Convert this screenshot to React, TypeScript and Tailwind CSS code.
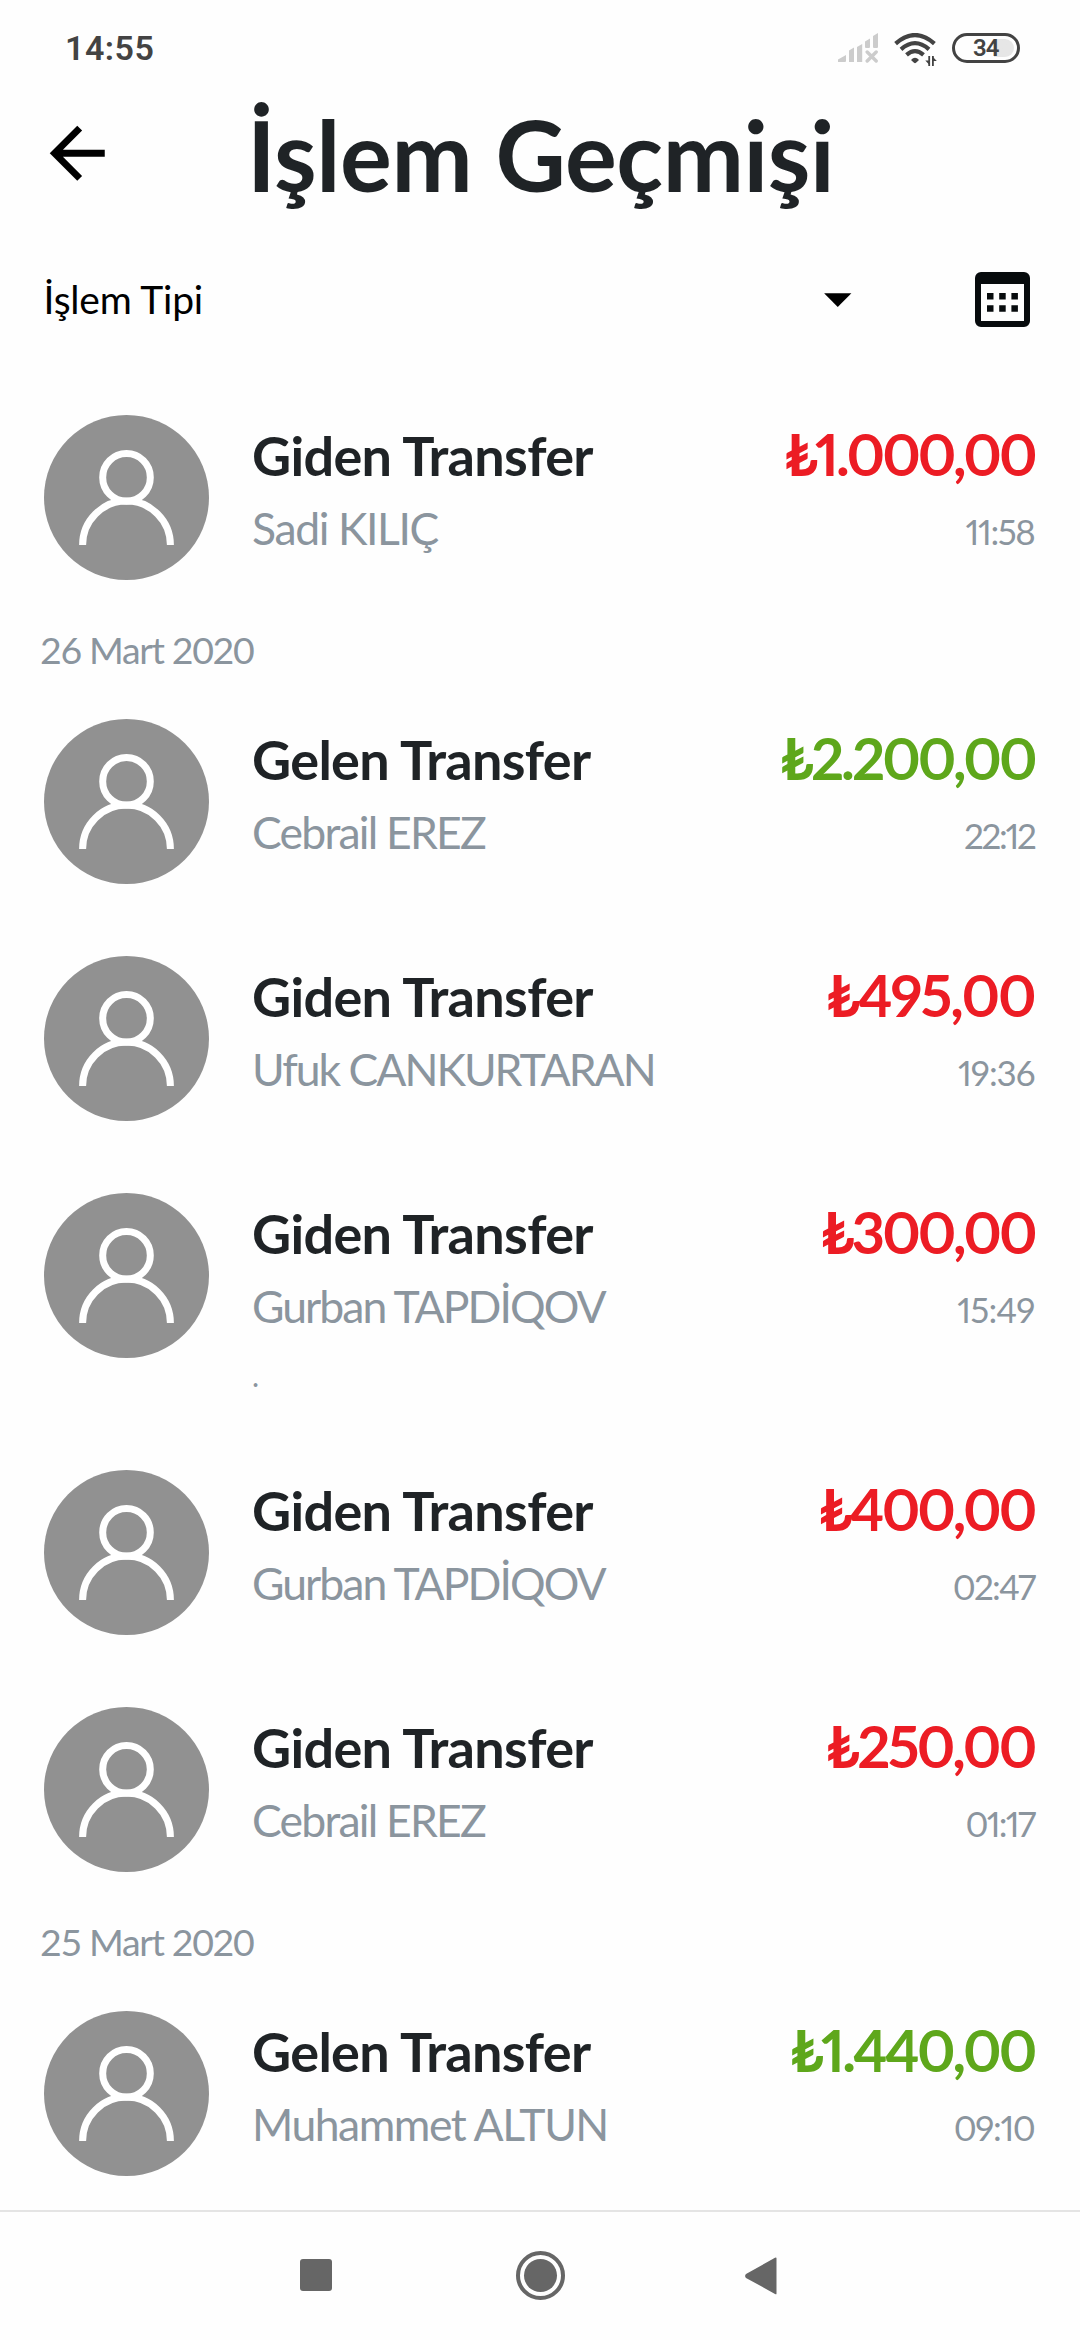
type Transfer = {
  title: string;
  name: string;
  nameClass: string;
  amount: string;
  amountClass: string;
  time: string;
  timeClass: string;
  incoming?: boolean;
  note?: string;
};

const groups: { date?: string; items: Transfer[] }[] = [
  {
    items: [
      { title: 'Giden Transfer', name: 'Sadi KILIÇ', nameClass: 'tracking-[-1.4px]', amount: '₺1.000,00', amountClass: 'tracking-[-3px]', time: '11:58', timeClass: 'tracking-[-1.4px]' },
    ],
  },
  {
    date: '26 Mart 2020',
    items: [
      { title: 'Gelen Transfer', name: 'Cebrail EREZ', nameClass: 'tracking-[-1.77px]', amount: '₺2.200,00', amountClass: 'tracking-[-3px]', time: '22:12', timeClass: 'tracking-[-2.3px]', incoming: true },
      { title: 'Giden Transfer', name: 'Ufuk CANKURTARAN', nameClass: 'tracking-[-2px]', amount: '₺495,00', amountClass: 'tracking-[-2.1px]', time: '19:36', timeClass: 'tracking-[-1.05px]' },
      { title: 'Giden Transfer', name: 'Gurban TAPDİQOV', nameClass: 'tracking-[-1.95px]', amount: '₺300,00', amountClass: 'tracking-[-3px]', time: '15:49', timeClass: 'tracking-[-0.8px]', note: '.' },
      { title: 'Giden Transfer', name: 'Gurban TAPDİQOV', nameClass: 'tracking-[-1.95px]', amount: '₺400,00', amountClass: 'tracking-[-2.9px]', time: '02:47', timeClass: 'tracking-[-1.8px]' },
      { title: 'Giden Transfer', name: 'Cebrail EREZ', nameClass: 'tracking-[-1.77px]', amount: '₺250,00', amountClass: 'tracking-[-2.75px]', time: '01:17', timeClass: 'tracking-[-1.8px]' },
    ],
  },
  {
    date: '25 Mart 2020',
    items: [
      { title: 'Gelen Transfer', name: 'Muhammet ALTUN', nameClass: 'tracking-[-1.5px]', amount: '₺1.440,00', amountClass: 'tracking-[-2.8px]', time: '09:10', timeClass: 'tracking-[-1.4px]', incoming: true },
    ],
  },
];

function StatusBar() {
  return (
    <header className="flex h-[68px] shrink-0 items-start justify-between pl-[65px] pr-[60px] font-['Roboto',sans-serif] text-[#434343]">
      <span className="mt-7 text-[34px] leading-10 font-semibold tracking-[0.5px]">14:55</span>
      <div className="mt-[33px] flex items-start">
        <svg className="mr-4 h-[30px] w-10" viewBox="0 0 40 30" fill="#cccccc">
          <path d="M0 29V26.5L8 22V28Q8 29 7 29ZM11 29V17.5L16 14.5V29ZM19 29V14L24.2 11V29ZM27 14V8.5L32 5.5V14Q32 15 31 15H28Q27 15 27 14ZM35 14V3L40 0V14Q40 15 39 15H36Q35 15 35 14Z" />
          <path d="M29.2 19l9 9M38.200 19l-9 9" stroke="#cccccc" strokeWidth="3.4" strokeLinecap="round" />
        </svg>
        <svg className="mr-[15px] h-[34px] w-[43px]" viewBox="0 0 43 34" fill="none" stroke="#434343">
          <path d="M1.6 10.6Q21 -6.5 40.4 10.6" strokeWidth="4.2" />
          <path d="M7 16.3Q21 4 35 16.3" strokeWidth="4.2" />
          <path d="M12.5 21.8Q21 14.500 29.5 21.8" strokeWidth="4.2" />
          <path d="M17 27Q21 22.5 25 27L22 29.800Q21 30.5 20 29.800Z" fill="#434343" stroke="none" />
          <path d="M35.2 23V33M38.9 23V33" strokeWidth="1.8" />
          <path d="M36 32.500L31.3 27.500H36ZM38.500 23.500L42.800 28H38.500Z" fill="#434343" stroke="none" />
        </svg>
        <div className="flex h-[30px] w-[68px] items-center justify-center rounded-full border-[3.5px] border-[#434343] p-[3px]">
          <div className="flex h-[18px] w-full items-center rounded-full bg-linear-to-r from-transparent from-65% to-[#e6e6e6] to-65% pl-[15px]">
            <span className="text-[24px] leading-none font-semibold tracking-[-1px]">34</span>
          </div>
        </div>
      </div>
    </header>
  );
}

function Avatar() {
  return (
    <svg className="size-[165px] shrink-0" viewBox="0 0 165 165" fill="none">
      <circle cx="82.5" cy="82.5" r="82.5" fill="#919191" />
      <circle cx="82.5" cy="62.4" r="23.8" stroke="#fff" strokeWidth="7" />
      <path d="M38.6 130a43.9 43.9 0 0 1 87.800 0" stroke="#fff" strokeWidth="7" />
    </svg>
  );
}

function Row({ item }: { item: Transfer }) {
  return (
    <li className={item.note ? 'flex h-[205px] items-start' : 'flex h-[165px] items-start'}>
      <Avatar />
      <div className="ml-[43px] flex flex-1 flex-col pt-[9px]">
        <span className="text-[54px] leading-[64px] font-bold tracking-[-0.67px] text-[#1f2326]">{item.title}</span>
        <span className={`mt-[13px] text-[44.5px] leading-[54px] ${item.nameClass}`}>{item.name}</span>
        {item.note && <span className="mt-[21px] text-[30px] leading-[42px]">{item.note}</span>}
      </div>
      <div className="flex flex-col items-end pt-[7px] proportional-nums">
        <span className={`text-[58px] leading-[64px] font-bold ${item.incoming ? 'text-[#5ea71b]' : 'text-[#ec1c24]'} ${item.amountClass}`}>{item.amount}</span>
        <span className={`mt-[23px] text-[35px] leading-[44px] ${item.timeClass}`}>{item.time}</span>
      </div>
    </li>
  );
}

export default function App() {
  return (
    <main className="flex h-[2340px] w-[1080px] flex-col overflow-hidden bg-[#fefefe] font-['Lato',sans-serif] text-[#8b959e]">
      <StatusBar />
      <div className="flex h-[160px] shrink-0 items-start pl-[36px]">
        <svg className="mt-[44px] size-[82.5px]" viewBox="0 0 24 24" fill="#000">
          <path d="M20 11H7.83l5.59-5.59L12 4l-8 8 8 8 1.41-1.41L7.83 13H20v-2z" />
        </svg>
        <h1 className="mt-[27px] ml-[128.5px] text-[97px] leading-[120px] font-bold tracking-[-0.4px] text-[#1f2326]">İşlem Geçmişi</h1>
      </div>
      <div className="flex h-[187px] shrink-0 items-start pl-[43.5px]">
        <span className="mt-[47px] w-[761px] text-[39px] leading-[48px] tracking-[-0.19px] text-black">İşlem Tipi</span>
        <svg className="mt-[38px] size-[65.5px]" viewBox="0 0 24 24" fill="#000">
          <path d="M7 10l5 5 5-5z" />
        </svg>
        <svg className="mt-[44px] ml-[105px] size-[55px]" viewBox="0 0 55 55" fill="#070b0d">
          <path fillRule="evenodd" d="M6 0H49A6 6 0 0 1 55 6V49A6 6 0 0 1 49 55H6A6 6 0 0 1 0 49V6A6 6 0 0 1 6 0ZM6 12V49H49V12Z" />
          <path d="M12 21h6.5v6.5H12zM24.2 21h6.5v6.5h-6.5zM36.4 21h6.5v6.5h-6.5zM12 33.2h6.5v6.5H12zM24.2 33.2h6.5v6.5h-6.5zM36.4 33.2h6.5v6.5h-6.5z" />
        </svg>
      </div>
      <div className="min-h-0 flex-1 overflow-hidden pr-[45.5px] pl-[44px]">
        {groups.map((group, i) => (
          <section key={i}>
            {group.date && <h2 className="ml-[-4px] h-[139px] pt-[45.5px] text-[37.5px] leading-[48px] tracking-[-1.36px]">{group.date}</h2>}
            <ul className="flex flex-col gap-[72px]">
              {group.items.map((item, j) => (
                <Row key={j} item={item} />
              ))}
            </ul>
          </section>
        ))}
      </div>
      <nav className="flex h-[130px] shrink-0 items-start border-t-2 border-[#e4e4e4] pt-[39px] pl-[300px]">
        <div className="mt-2 size-8 rounded-[3px] bg-[#666]" />
        <svg className="ml-[184px] size-[49px]" viewBox="0 0 49 49">
          <circle cx="24.5" cy="24.5" r="22.5" fill="none" stroke="#666" strokeWidth="4" />
          <circle cx="24.5" cy="24.5" r="16.5" fill="#666" />
        </svg>
        <svg className="mt-[6px] ml-[180px] h-[38px] w-8" viewBox="0 0 32 38" fill="#666">
          <path d="M30 .8Q31.5 -.3 31.5 1.5V36.5Q31.5 38 30 36.9L1 21Q-.8 19 1 17Z" />
        </svg>
      </nav>
    </main>
  );
}
